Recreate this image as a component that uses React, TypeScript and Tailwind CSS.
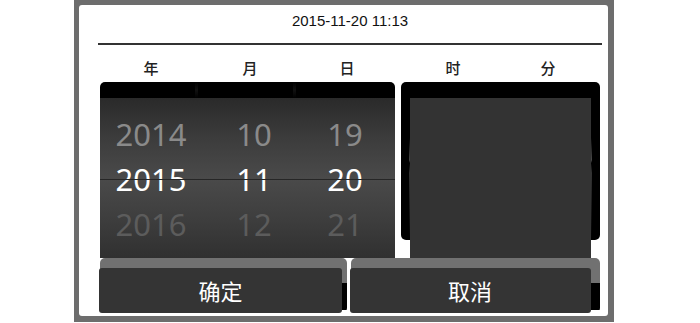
import React from 'react';

const COLS = [
  { top: '2014', mid: '2015', bot: '2016' },
  { top: '10', mid: '11', bot: '12' },
  { top: '19', mid: '20', bot: '21' },
];

const cjk = "font-['Noto_Sans_CJK_SC','Noto_Sans',sans-serif]";

function Wheel() {
  return (
    <div className="flex h-[176px] w-[295px] flex-col">
      <div className="flex h-[16px] rounded-t-[5px] bg-black">
        <div className="w-[95px]" />
        <div className="w-[3px] bg-[linear-gradient(to_bottom,#000,#111,#000)]" />
        <div className="w-[95px]" />
        <div className="w-[3px] bg-[linear-gradient(to_bottom,#000,#111,#000)]" />
      </div>
      <div className="relative flex-1 bg-[linear-gradient(to_bottom,#2a2a2a_0%,#3c3c3c_25%,#4a4a4a_50%,#3e3e3e_75%,#303030_100%)] pt-[14px] font-['Noto_Sans',sans-serif] text-[31px]">
        <div className="absolute left-0 right-0 top-[81px] h-px bg-[#262626]" />
        <div className="grid grid-cols-[102px_104px_78px]">
          {COLS.map((c) => (
            <div key={c.mid} className="flex flex-col items-center">
              <div className="h-[45px] leading-[45px] text-[#8a8a8a]">{c.top}</div>
              <div className="h-[45px] leading-[45px] text-white">{c.mid}</div>
              <div className="h-[45px] leading-[45px] text-[#5c5c5c]">{c.bot}</div>
            </div>
          ))}
        </div>
      </div>
    </div>
  );
}

function Side({ left }: { left?: boolean }) {
  return (
    <div className={`flex h-[142px] w-[9px] bg-black ${left ? 'justify-end rounded-bl-[5px]' : 'justify-start rounded-br-[5px]'}`}>
      <div className="mt-[40px] h-[100px] w-px bg-[linear-gradient(to_bottom,transparent,#4a4a4a_22%,#000_25%,#333_35%,transparent)]" />
    </div>
  );
}

function TimeBox() {
  return (
    <div className="flex h-[176px] w-[199px] flex-col">
      <div className="h-[16px] rounded-t-[5px] bg-black" />
      <div className="flex flex-1 items-start">
        <Side left />
        <div className="h-full flex-1 bg-[#333333]" />
        <Side />
      </div>
    </div>
  );
}

function Key({ label, w, bw }: { label: string; w: string; bw: string }) {
  return (
    <div
      className={`${w} h-[55px] rounded-[5px] bg-[linear-gradient(to_bottom,#717171_0px,#717171_25px,#000_25px,#000_52px,transparent_52px)] pt-[10px]`}
    >
      <button
        className={`${bw} -ml-px h-[45px] rounded-[3px] bg-[#343434] text-[22px] text-white ${cjk}`}
      >
        {label}
      </button>
    </div>
  );
}

export default function App() {
  return (
    <div className="h-[323px] w-[700px] bg-white">
      <div className="ml-[74px] h-[322px] w-[540px] bg-[#6d6d6d] pb-[6px] pl-[5px] pr-[6px] pt-[5px]">
        <div className="flex h-full flex-col rounded-[3px] bg-white pl-[21px] pr-[8px]">
          <div className="h-[38px] pt-[6px] text-center font-['Liberation_Sans',Arial,sans-serif] text-[15px] leading-[20px] text-[#111]">
            2015-11-20 11:13
          </div>
          <div className="-mx-[2px] h-[2px] bg-[#333333]" />
          <div className={`flex h-[37px] pt-[13px] text-[15px] font-medium leading-[20px] text-[#222] ${cjk}`}>
            <div className="grid w-[301px] grid-cols-[102px_96px_98px] text-center">
              <span>年</span>
              <span>月</span>
              <span>日</span>
            </div>
            <div className="grid w-[199px] grid-cols-[104px_86px] text-center">
              <span>时</span>
              <span>分</span>
            </div>
          </div>
          <div className="flex h-[176px] gap-[6px]">
            <Wheel />
            <TimeBox />
          </div>
          <div className="flex h-[55px] gap-[4px]">
            <Key label="确定" w="w-[247px]" bw="w-[243px]" />
            <Key label="取消" w="w-[250px]" bw="w-[241px]" />
          </div>
        </div>
      </div>
    </div>
  );
}
